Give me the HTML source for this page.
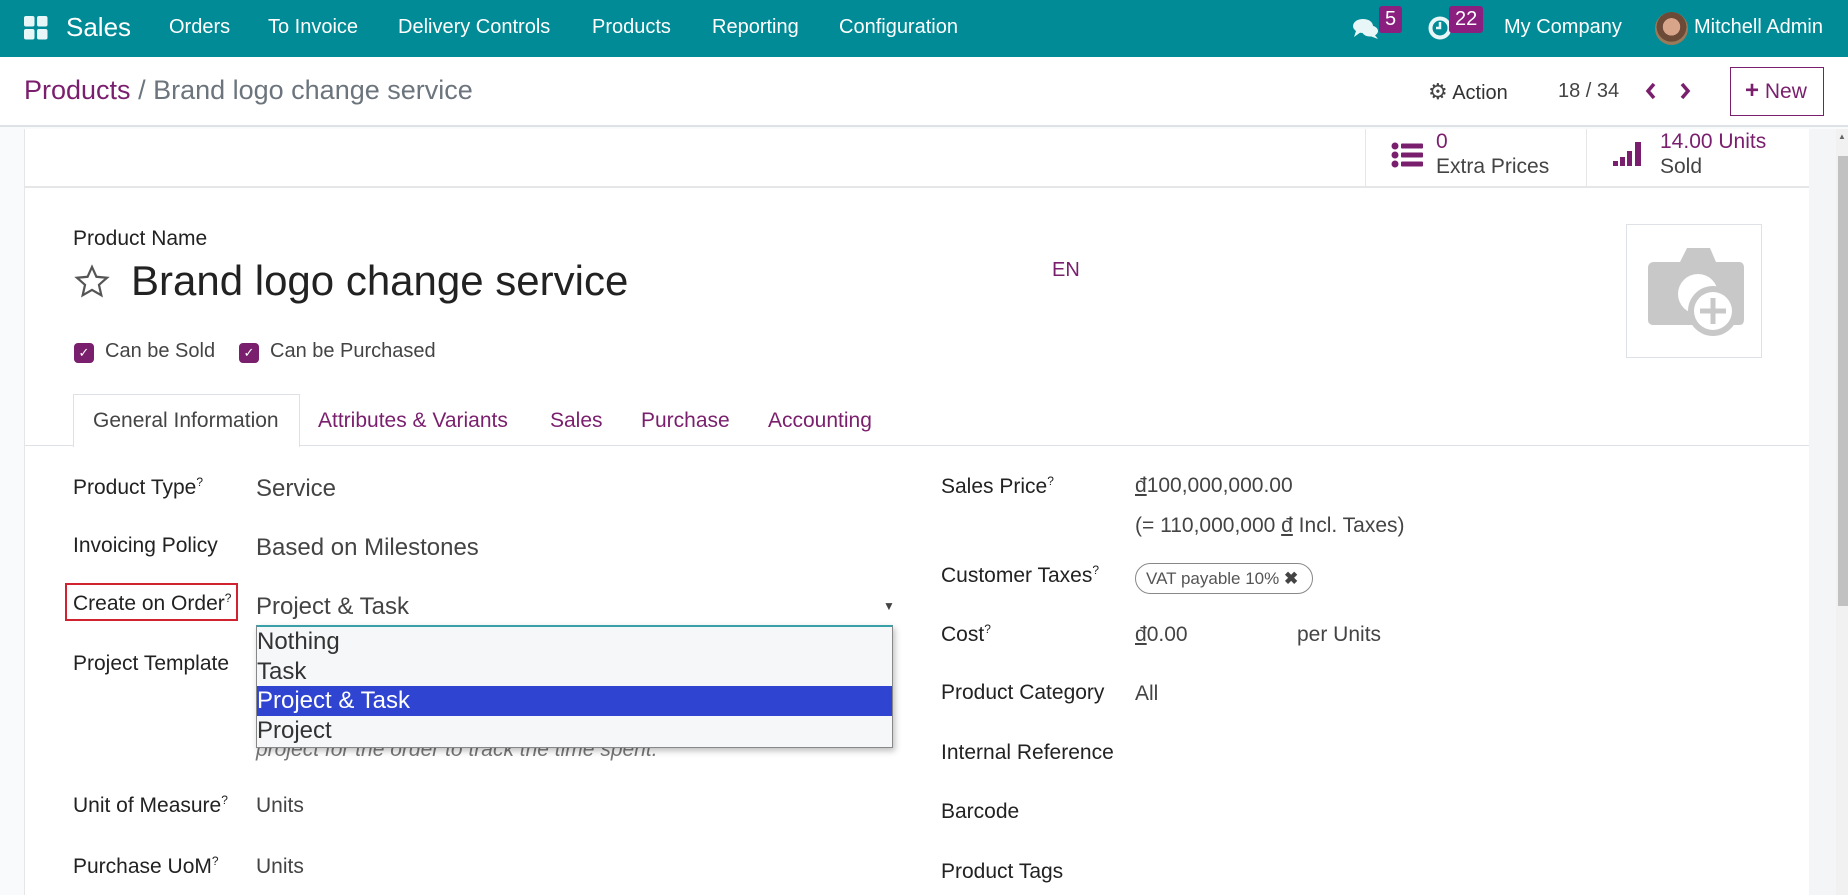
<!DOCTYPE html>
<html><head><meta charset="utf-8"><style>
*{box-sizing:border-box;margin:0;padding:0}
body{width:1848px;height:895px;overflow:hidden;font-family:"Liberation Sans",sans-serif;background:#f9fafb;position:relative;color:#222}
.a{position:absolute;white-space:nowrap}
.nav{left:0;top:0;width:1848px;height:57px;background:#018b96}
.nav .a{color:#fff;font-size:20px;top:16px}
.badge{background:#8a1f7f;color:#fff;font-size:14px;border-radius:3px;padding:2px 6px;top:6px!important}
.cp{left:0;top:57px;width:1848px;height:70px;background:#fff;border-bottom:2px solid #dee2e6}
.sheet{left:24px;top:129px;width:1785px;height:766px;background:#fff;border-left:1px solid #e4e6e8}
.lbl{font-size:21px;color:#222}
.val{font-size:21px;color:#444}
.p{color:#7a1f6d}
sup{font-size:12px}
</style></head><body>
<div class="a nav">
  <svg class="a" style="left:24px;top:16px" width="24" height="24" viewBox="0 0 24 24" fill="#e8f6f7"><rect x="0" y="0" width="10.5" height="10.5" rx="2"/><rect x="13" y="0" width="10.5" height="10.5" rx="2"/><rect x="0" y="13" width="10.5" height="10.5" rx="2"/><rect x="13" y="13" width="10.5" height="10.5" rx="2"/></svg>
  <div class="a" style="left:66px;top:12px;font-size:26px">Sales</div>
  <div class="a" style="left:169px">Orders</div>
  <div class="a" style="left:268px">To Invoice</div>
  <div class="a" style="left:398px">Delivery Controls</div>
  <div class="a" style="left:592px">Products</div>
  <div class="a" style="left:712px">Reporting</div>
  <div class="a" style="left:839px">Configuration</div>
  <svg class="a" style="left:1352px;top:18px" width="28" height="22" viewBox="0 0 28 22" fill="#e8f6f7"><ellipse cx="11" cy="8" rx="10" ry="7"/><path d="M4 13 L2 19 L9 14Z"/><ellipse cx="18" cy="13" rx="8" ry="5.5"/><path d="M22 16 L26 21 L18 18Z"/></svg>
  <div class="a badge" style="left:1379px">5</div>
  <svg class="a" style="left:1428px;top:16px" width="24" height="24" viewBox="0 0 24 24"><circle cx="12" cy="12" r="9.5" fill="none" stroke="#e8f6f7" stroke-width="4"/><path d="M12 6v6h-4" stroke="#e8f6f7" stroke-width="2.5" fill="none"/></svg>
  <div class="a badge" style="left:1449px">22</div>
  <div class="a" style="left:1504px">My Company</div>
  <div class="a" style="left:1655px;top:12px;width:33px;height:33px;border-radius:50%;background:radial-gradient(circle at 50% 45%,#d9a58a 0 35%,#6b4a38 36% 60%,#9a7a58 61%)"></div>
  <div class="a" style="left:1694px">Mitchell Admin</div>
</div>
<div class="a cp">
  <div class="a" style="left:24px;top:18px;font-size:27px"><span class="p">Products</span><span style="color:#6c757d"> / Brand logo change service</span></div>
  <div class="a" style="left:1428px;top:22px;font-size:20px;color:#333"><span style="color:#444;font-size:22px">&#9881;</span> Action</div>
  <div class="a" style="left:1558px;top:23px;font-size:20px;color:#444">18 / 34</div>
  <svg class="a" style="left:1644px;top:24px" width="50" height="20" viewBox="0 0 50 20"><path d="M10 3 L4 10 L10 17" stroke="#7a1f6d" stroke-width="3.5" fill="none"/><path d="M38 3 L44 10 L38 17" stroke="#7a1f6d" stroke-width="3.5" fill="none"/></svg>
  <div class="a" style="left:1730px;top:10px;width:94px;height:49px;border:1px solid #7a1f6d;color:#7a1f6d;font-size:21px;padding:12px 0 0 14px"><b style="font-size:24px;line-height:20px">+</b> New</div>
</div>
<div class="a sheet">
  <div class="a" style="left:0;top:57px;width:1785px;border-top:2px solid #e4e6e8"></div>
  <div class="a" style="left:1340px;top:0;height:57px;border-left:1px solid #e4e6e8"></div>
  <div class="a" style="left:1561px;top:0;height:57px;border-left:1px solid #e4e6e8"></div>
  <svg class="a" style="left:1366px;top:12px" width="34" height="28" viewBox="0 0 34 28" fill="#7a1f6d"><circle cx="4" cy="5" r="3.5"/><circle cx="4" cy="14" r="3.5"/><circle cx="4" cy="23" r="3.5"/><rect x="10" y="2.5" width="22" height="5" rx="1"/><rect x="10" y="11.5" width="22" height="5" rx="1"/><rect x="10" y="20.5" width="22" height="5" rx="1"/></svg>
  <div class="a p" style="left:1411px;top:1px;font-size:21px">0</div>
  <div class="a" style="left:1411px;top:26px;font-size:21px;color:#444">Extra Prices</div>
  <svg class="a" style="left:1588px;top:10px" width="34" height="30" viewBox="0 0 34 30" fill="#7a1f6d"><rect x="0" y="22" width="5" height="5"/><rect x="7" y="18" width="5" height="9"/><rect x="14" y="12" width="5" height="15"/><rect x="22" y="3" width="6" height="24"/></svg>
  <div class="a p" style="left:1635px;top:1px;font-size:21px">14.00 Units</div>
  <div class="a" style="left:1635px;top:26px;font-size:21px;color:#444">Sold</div>

  <div class="a" style="left:48px;top:98px;font-size:21px">Product Name</div>
  <svg class="a" style="left:48px;top:134px" width="38" height="38" viewBox="0 0 24 24"><path d="M12 2.5l2.8 6.2 6.7.6-5.1 4.5 1.5 6.6L12 17l-5.9 3.4 1.5-6.6-5.1-4.5 6.7-.6z" fill="none" stroke="#555" stroke-width="1.4"/></svg>
  <div class="a" style="left:106px;top:128px;font-size:42px;color:#222">Brand logo change service</div>
  <div class="a p" style="left:1027px;top:130px;font-size:20px">EN</div>
  <div class="a" style="left:1601px;top:95px;width:136px;height:134px;border:1px solid #dee2e6"></div>
  <svg class="a" style="left:1615px;top:119px" width="106" height="92" viewBox="0 0 106 92"><path d="M14 14 H40 L47 0 H70 L76 14 H99 Q104 14 104 20 V72 Q104 77 99 77 H14 Q8 77 8 72 V20 Q8 14 14 14Z" fill="#c8c8c8"/><circle cx="58" cy="46" r="20" fill="#fff"/><circle cx="73" cy="63" r="25" fill="#c8c8c8"/><circle cx="73" cy="63" r="19" fill="#fff"/><path d="M73 50v26M60 63h26" stroke="#c8c8c8" stroke-width="5"/></svg>

  <div class="a" style="left:49px;top:214px;width:20px;height:20px;border-radius:4px;background:#7a1f6d;color:#fff;font-size:13px;text-align:center;line-height:20px">&#10003;</div>
  <div class="a" style="left:80px;top:211px;font-size:20px;color:#444">Can be Sold</div>
  <div class="a" style="left:214px;top:214px;width:20px;height:20px;border-radius:4px;background:#7a1f6d;color:#fff;font-size:13px;text-align:center;line-height:20px">&#10003;</div>
  <div class="a" style="left:245px;top:211px;font-size:20px;color:#444">Can be Purchased</div>

  <div class="a" style="left:0;top:316px;width:1785px;border-top:1px solid #dee2e6"></div>
  <div class="a" style="left:48px;top:265px;width:227px;height:53px;border:1px solid #dee2e6;border-bottom:none;background:#fff"></div>
  <div class="a" style="left:68px;top:280px;font-size:21px;color:#444">General Information</div>
  <div class="a p" style="left:293px;top:280px;font-size:21px">Attributes &amp; Variants</div>
  <div class="a p" style="left:525px;top:280px;font-size:21px">Sales</div>
  <div class="a p" style="left:616px;top:280px;font-size:21px">Purchase</div>
  <div class="a p" style="left:743px;top:280px;font-size:21px">Accounting</div>

  <div class="a lbl" style="left:48px;top:346px">Product Type<sup>?</sup></div>
  <div class="a val" style="left:231px;top:346px;font-size:24px">Service</div>
  <div class="a lbl" style="left:48px;top:405px">Invoicing Policy</div>
  <div class="a val" style="left:231px;top:405px;font-size:24px">Based on Milestones</div>
  <div class="a" style="left:40px;top:454px;width:173px;height:38px;border:2px solid #d0232f"></div>
  <div class="a lbl" style="left:48px;top:462px">Create on Order<sup>?</sup></div>
  <div class="a val" style="left:231px;top:464px;font-size:24px">Project &amp; Task</div>
  <div class="a" style="left:858px;top:470px;font-size:12px;color:#444">&#9660;</div>
  <div class="a lbl" style="left:48px;top:523px">Project Template</div>
  <div class="a" style="left:231px;top:609px;font-size:21px;color:#777;font-style:italic">project for the order to track the time spent.</div>
  <div class="a" style="left:231px;top:496px;width:637px;height:123px;background:#f6f7f9;border:1px solid #888;border-top:2px solid #3aa0a8;box-shadow:2px 3px 6px rgba(0,0,0,.25);font-size:24px;color:#333;line-height:29.5px">
    <div>Nothing</div>
    <div>Task</div>
    <div style="background:#2f45d1;color:#fff">Project &amp; Task</div>
    <div>Project</div>
  </div>
  <div class="a lbl" style="left:48px;top:664px">Unit of Measure<sup>?</sup></div>
  <div class="a val" style="left:231px;top:665px">Units</div>
  <div class="a lbl" style="left:48px;top:725px">Purchase UoM<sup>?</sup></div>
  <div class="a val" style="left:231px;top:726px">Units</div>

  <div class="a lbl" style="left:916px;top:345px">Sales Price<sup>?</sup></div>
  <div class="a val" style="left:1110px;top:345px"><u>đ</u>100,000,000.00</div>
  <div class="a val" style="left:1110px;top:385px">(= 110,000,000 <u>đ</u> Incl. Taxes)</div>
  <div class="a lbl" style="left:916px;top:434px">Customer Taxes<sup>?</sup></div>
  <div class="a" style="left:1110px;top:434px;width:178px;height:31px;border:1px solid #888;border-radius:16px;font-size:17px;color:#555;padding:5px 0 0 10px">VAT payable 10% <b style="color:#444">&#10006;</b></div>
  <div class="a lbl" style="left:916px;top:493px">Cost<sup>?</sup></div>
  <div class="a val" style="left:1110px;top:494px"><u>đ</u>0.00</div>
  <div class="a val" style="left:1272px;top:494px">per Units</div>
  <div class="a lbl" style="left:916px;top:552px">Product Category</div>
  <div class="a val" style="left:1110px;top:553px">All</div>
  <div class="a lbl" style="left:916px;top:612px">Internal Reference</div>
  <div class="a lbl" style="left:916px;top:671px">Barcode</div>
  <div class="a lbl" style="left:916px;top:731px">Product Tags</div>
</div>
<div class="a" style="left:1809px;top:129px;width:27px;height:766px;background:#f4f5f7"></div>
<div class="a" style="left:1836px;top:129px;width:12px;height:766px;background:#f1f1f1"></div>
<div class="a" style="left:1838px;top:156px;width:10px;height:450px;background:#c1c1c1"></div>
<div class="a" style="left:1838px;top:132px;font-size:8px;color:#666">&#9650;</div>
</body></html>
